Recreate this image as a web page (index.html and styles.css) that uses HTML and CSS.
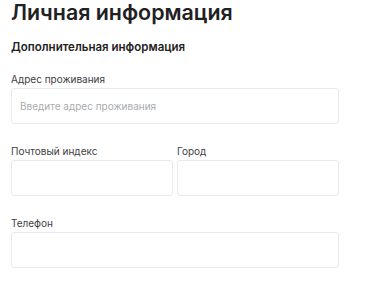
FILE: index.html
```html
<!DOCTYPE html>
<html lang="ru">
<head>
<meta charset="utf-8">
<link rel="stylesheet" href="styles.css">
</head>
<body>
<div class="page">
  <h1 class="title">Личная информация</h1>
  <h2 class="subtitle">Дополнительная информация</h2>
  <div class="field">
    <label class="label">Адрес проживания</label>
    <input class="input" type="text" placeholder="Введите адрес проживания">
  </div>
  <div class="row">
    <div class="field">
      <label class="label">Почтовый индекс</label>
      <input class="input" type="text">
    </div>
    <div class="field">
      <label class="label">Город</label>
      <input class="input" type="text">
    </div>
  </div>
  <div class="field field-last">
    <label class="label">Телефон</label>
    <input class="input" type="text">
  </div>
</div>
</body>
</html>
```
FILE: styles.css
```css
html, body {
  margin: 0;
  padding: 0;
  background: #ffffff;
}
body {
  font-family: Inter, "Noto Sans", sans-serif;
  color: #222426;
}
.page {
  width: 328px;
  padding: 0 11px;
  display: flex;
  flex-direction: column;
}
.title {
  margin: 0;
  font-size: 21.4px;
  line-height: 24px;
  font-weight: 600;
  color: #1f2124;
}
.subtitle {
  margin: 16px 0 0;
  font-size: 11.5px;
  line-height: 15px;
  font-weight: 600;
  color: #1f2124;
}
.field {
  display: flex;
  flex-direction: column;
  gap: 2px;
  margin-top: 17px;
  min-width: 0;
}
.row {
  display: grid;
  grid-template-columns: 1fr 1fr;
  gap: 4px;
}
.row .field,
.field-last {
  margin-top: 20px;
}
.label {
  font-size: 10px;
  line-height: 14px;
  color: #3d4044;
}
.input {
  box-sizing: border-box;
  height: 36px;
  width: 100%;
  margin: 0;
  padding: 0 8px;
  border: 1px solid #e8e9eb;
  border-radius: 3px;
  background: #fff;
  font-family: inherit;
  font-size: 10px;
  color: #222;
  outline: none;
}
.input::placeholder {
  color: #a9acb0;
}
```
